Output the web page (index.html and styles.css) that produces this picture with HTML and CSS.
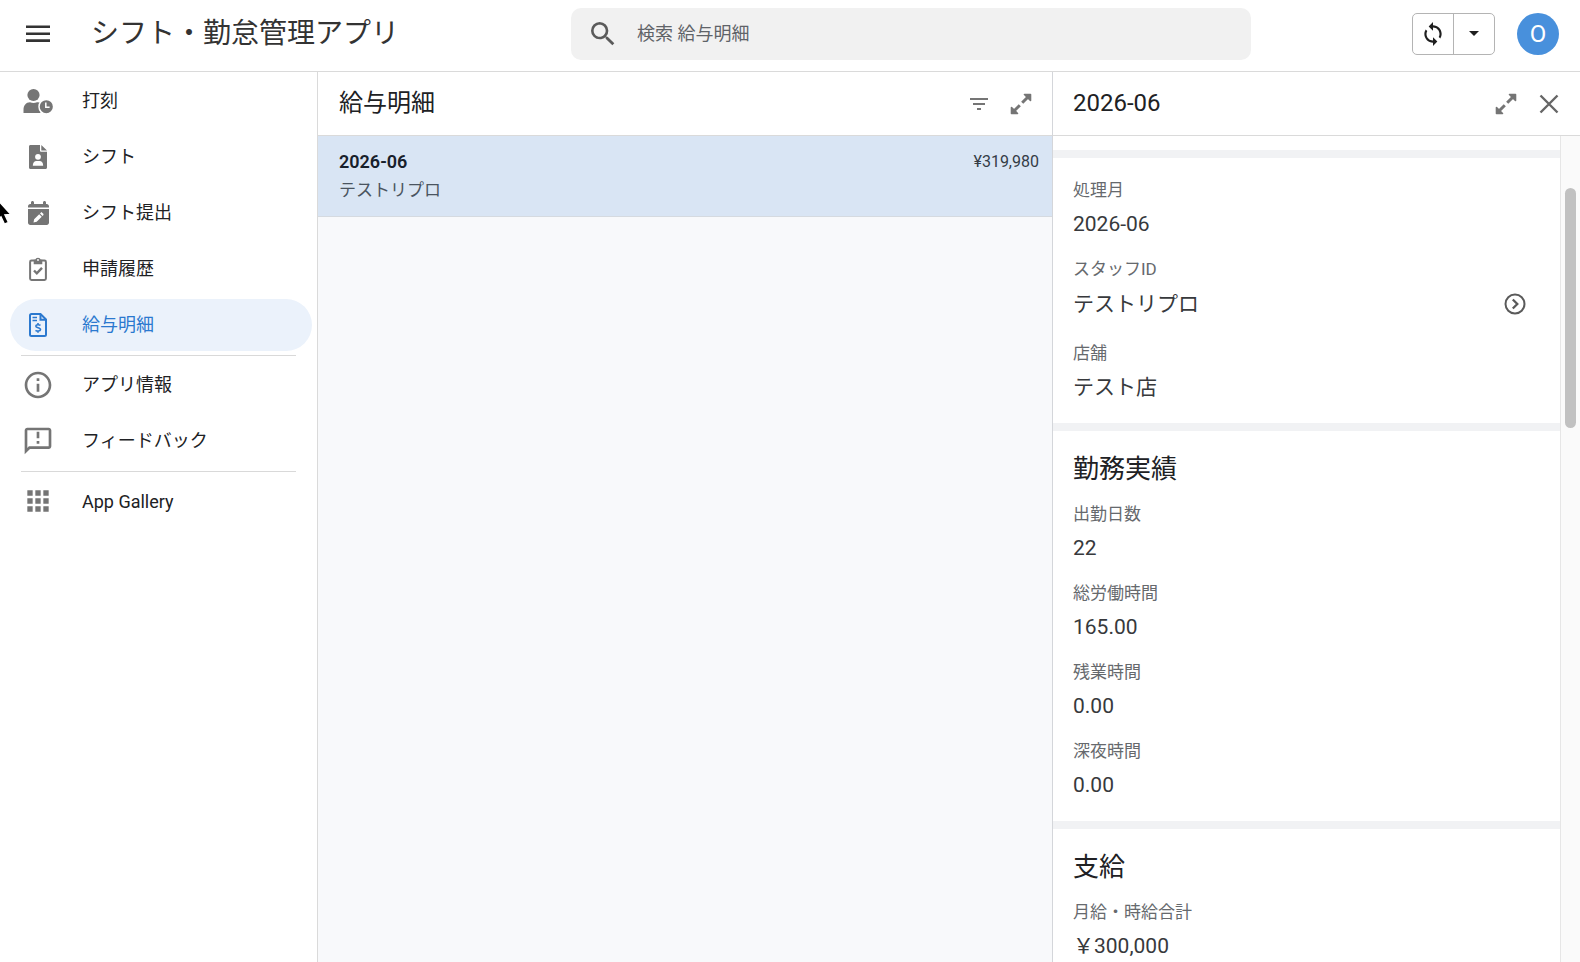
FILE: index.html
```html
<!DOCTYPE html>
<html lang="ja">
<head>
<meta charset="utf-8">
<meta name="viewport" content="width=device-width, initial-scale=1">
<title>シフト・勤怠管理アプリ</title>
<link rel="stylesheet" href="styles.css">
</head>
<body>
<div class="app">
  <header class="topbar">
    <div class="brand">
      <button class="icon-button" type="button" aria-label="メニュー">
        <svg width="24" height="18" viewBox="0 0 24 18" fill="#333"><path d="M0 .5h24v2.600H0zM0 7.400h24V10H0zM0 14.300h24v2.600H0z"/></svg>
      </button>
      <h1 class="app-title">シフト・勤怠管理アプリ</h1>
    </div>
    <label class="search">
      <svg width="32" height="32" viewBox="0 0 24 24" fill="#5a5a5a"><path d="M15.5 14h-.79l-.28-.27A6.471 6.471 0 0 0 16 9.5 6.5 6.5 0 1 0 9.5 16c1.61 0 3.09-.59 4.23-1.57l.27.28v.79l5 4.99L20.49 19l-4.99-5zm-6 0C7.01 14 5 11.99 5 9.5S7.01 5 9.5 5 14 7.01 14 9.5 11.99 14 9.5 14z"/></svg>
      <input class="search-input" type="search" placeholder="検索 給与明細" aria-label="検索 給与明細">
    </label>
    <div class="actions">
      <div class="sync-group">
        <button class="sync-button" type="button" aria-label="同期">
          <svg width="26" height="26" viewBox="0 0 24 24" fill="#1f1f1f"><path d="M12 4V1L8 5l4 4V6c3.31 0 6 2.69 6 6 0 1.01-.25 1.97-.7 2.8l1.46 1.46A7.93 7.93 0 0 0 20 12c0-4.42-3.58-8-8-8zm0 14c-3.31 0-6-2.69-6-6 0-1.01.25-1.97.7-2.8L5.24 7.74A7.93 7.93 0 0 0 4 12c0 4.42 3.58 8 8 8v3l4-4-4-4v3z"/></svg>
        </button>
        <button class="sync-button" type="button" aria-label="同期オプション">
          <svg width="10" height="5" viewBox="0 0 10 5" fill="#1f1f1f"><path d="M0 0h10L5 5z"/></svg>
        </button>
      </div>
      <button class="avatar" type="button">O</button>
    </div>
  </header>

  <div class="workspace">
    <nav class="sidebar">
      <a class="nav-item" href="#"><span class="nav-icon"><svg width="30" height="26" viewBox="0 0 30 26"><g fill="#757575"><circle cx="10.500" cy="7" r="6.100"/><path d="M.5 25v-3.200C.5 17.600 3 14.300 7 14.300c2.300 1 4.700 1 7 0 1.500 0 2.600.4 3.500 1v9.700z"/></g><circle cx="23.300" cy="18.700" r="7.300" fill="#757575" stroke="#fff" stroke-width="1.500"/><path d="M22.800 14.600v4.600h3.800" fill="none" stroke="#fff" stroke-width="1.500"/></svg></span><span class="nav-label">打刻</span></a>
      <a class="nav-item" href="#"><span class="nav-icon"><svg width="18" height="24" viewBox="0 0 18 24"><path fill="#757575" d="M1.500 0H11v5.500c0 .8.500 1.300 1.300 1.300H18v15.700c0 .9-.6 1.500-1.500 1.500h-15C.6 24 0 23.400 0 22.500v-21C0 .6.6 0 1.500 0zM12.300 0 18 5.600h-5.700z"/><circle cx="9" cy="11.800" r="2.900" fill="#fff"/><path fill="#fff" d="M3.800 20.800c0-3 1.600-4.700 3.500-4.700h3.400c1.900 0 3.500 1.700 3.500 4.700z"/></svg></span><span class="nav-label">シフト</span></a>
      <a class="nav-item" href="#"><span class="nav-icon"><svg width="21" height="24" viewBox="0 0 448 512"><path fill="#757575" d="M96 0c18 0 32 14 32 32v32h192V32c0-18 14-32 32-32s32 14 32 32v32h16c26 0 48 22 48 48v28H0v-28c0-26 22-48 48-48h16V32C64 14 78 0 96 0zM0 172h448v292c0 26-22 48-48 48H48c-26 0-48-22-48-48z"/><path fill="#fff" d="m117 456 14-66 108-108 54 54-108 108zM256 265l16-16c9-9 21-9 30 0l24 24c9 9 9 21 0 30l-16 16z"/></svg></span><span class="nav-label">シフト提出</span></a>
      <a class="nav-item" href="#"><span class="nav-icon"><svg width="18" height="24" viewBox="0 0 18 24" fill="none" stroke="#757575" stroke-width="2"><path d="M2.500 3.600h13a1.400 1.400 0 0 1 1.400 1.400v16.500a1.400 1.400 0 0 1-1.400 1.400h-13a1.400 1.400 0 0 1-1.400-1.400V5a1.400 1.400 0 0 1 1.400-1.400z"/><path fill="#757575" stroke="none" d="M4.700 2.800h1.500a2.900 2.900 0 0 1 5.600 0h1.500v4.400H4.700z"/><circle cx="9" cy="3" r=".9" fill="#fff" stroke="none"/><path d="m5 13.500 2.800 2.800 5.200-5.400" stroke-width="2.400"/></svg></span><span class="nav-label">申請履歴</span></a>
      <a class="nav-item nav-item-active" href="#" aria-current="page"><span class="nav-icon"><svg width="18" height="24" viewBox="0 0 18 24" fill="none" stroke="#2b79cf" stroke-width="2"><path d="M2.500 1h9l5.500 5.500v15a1.500 1.500 0 0 1-1.500 1.500h-13A1.500 1.500 0 0 1 1 21.500v-19A1.500 1.500 0 0 1 2.500 1z"/><path d="M11.500 1v5.800H17" /><path d="M3.500 4.400h4.500M3.500 7.400h4.500" stroke-width="1.500"/><path d="M11.500 12.300c-1-.7-4.500-1-4.700.8-.2 2 4.900 1.300 4.700 3.500-.2 2-3.800 1.600-5 .7M9 10v2M9 18v1.800" stroke-width="1.600"/></svg></span><span class="nav-label">給与明細</span></a>
      <hr class="nav-divider">
      <a class="nav-item" href="#"><span class="nav-icon"><svg width="32" height="32" viewBox="0 0 24 24" fill="#757575"><path d="M11 7h2v2h-2zm0 4h2v6h-2zm1-9C6.480 2 2 6.480 2 12s4.480 10 10 10 10-4.480 10-10S17.520 2 12 2zm0 18c-4.410 0-8-3.590-8-8s3.590-8 8-8 8 3.590 8 8-3.590 8-8 8z"/></svg></span><span class="nav-label">アプリ情報</span></a>
      <a class="nav-item" href="#"><span class="nav-icon"><svg width="32" height="32" viewBox="0 0 24 24" fill="#757575"><path d="M20 2H4c-1.100 0-1.990.9-1.990 2L2 22l4-4h14c1.100 0 2-.9 2-2V4c0-1.100-.9-2-2-2zm0 14H5.170L4 17.170V4h16v12zM11 5h2v5h-2zm0 7h2v2h-2z"/></svg></span><span class="nav-label">フィードバック</span></a>
      <hr class="nav-divider">
      <a class="nav-item" href="#"><span class="nav-icon"><svg width="32" height="32" viewBox="0 0 24 24" fill="#757575"><path d="M4 8h4V4H4zm6 12h4v-4h-4zm-6 0h4v-4H4zm0-6h4v-4H4zm6 0h4v-4h-4zm6-10v4h4V4zm-6 4h4V4h-4zm6 6h4v-4h-4zm0 6h4v-4h-4z"/></svg></span><span>App Gallery</span></a>
    </nav>

    <main class="list-pane">
      <div class="pane-header">
        <h2 class="pane-title">給与明細</h2>
        <button class="icon-button" type="button" aria-label="フィルター">
          <svg width="18" height="12" viewBox="0 0 18 12" fill="#757575"><path d="M0 0h18v2H0zM3 5h12v2H3zM7 10h4v2H7z"/></svg>
        </button>
        <button class="icon-button" type="button" aria-label="拡大">
          <svg width="22" height="22" viewBox="0 0 22 22" fill="#757575" stroke="#757575" stroke-linejoin="round"><path d="M14.500 1.500h6v6zM1.500 14.500v6h6z" stroke-width="1.600"/><path d="m18 4-5.800 5.800M9.800 12.200 4 18" stroke-width="3"/></svg>
        </button>
      </div>
      <a class="slip-row" href="#">
        <span class="slip-text">
          <strong class="slip-month">2026-06</strong>
          <span class="slip-name">テストリプロ</span>
        </span>
        <span class="slip-amount">¥319,980</span>
      </a>
    </main>

    <aside class="detail-pane">
      <div class="pane-header">
        <h2 class="pane-title">2026-06</h2>
        <button class="icon-button" type="button" aria-label="拡大">
          <svg width="22" height="22" viewBox="0 0 22 22" fill="#757575" stroke="#757575" stroke-linejoin="round"><path d="M14.500 1.500h6v6zM1.500 14.500v6h6z" stroke-width="1.600"/><path d="m18 4-5.800 5.800M9.800 12.200 4 18" stroke-width="3"/></svg>
        </button>
        <button class="icon-button" type="button" aria-label="閉じる">
          <svg width="20" height="20" viewBox="0 0 20 20" fill="none" stroke="#666" stroke-width="2.400"><path d="m1.500 1.500 17 17M18.500 1.500l-17 17"/></svg>
        </button>
      </div>
      <div class="detail-scroll">
        <div class="detail-body">
          <section class="section">
            <dl class="fields">
              <div class="field"><dt>処理月</dt><dd>2026-06</dd></div>
              <div class="field"><dt>スタッフID</dt><dd class="reference">テストリプロ
                <button class="icon-button" type="button" aria-label="スタッフを表示"><svg width="22" height="22" viewBox="0 0 22 22" fill="none" stroke="#5a5a5a" stroke-width="2"><circle cx="11" cy="11" r="9.500"/><path d="m8.800 6.500 4.500 4.500-4.500 4.500" stroke-width="2.300"/></svg></button></dd></div>
              <div class="field"><dt>店舗</dt><dd>テスト店</dd></div>
            </dl>
          </section>
          <section class="section">
            <h3 class="section-title">勤務実績</h3>
            <dl class="fields">
              <div class="field"><dt>出勤日数</dt><dd>22</dd></div>
              <div class="field"><dt>総労働時間</dt><dd>165.00</dd></div>
              <div class="field"><dt>残業時間</dt><dd>0.00</dd></div>
              <div class="field"><dt>深夜時間</dt><dd>0.00</dd></div>
            </dl>
          </section>
          <section class="section">
            <h3 class="section-title">支給</h3>
            <dl class="fields">
              <div class="field"><dt>月給・時給合計</dt><dd>￥300,000</dd></div>
            </dl>
          </section>
        </div>
        <div class="scroll-track"><div class="scroll-thumb"></div></div>
      </div>
    </aside>
  </div>
  <svg class="cursor" width="14" height="26" viewBox="0 0 14 26"><path d="M-5-6 11 11.500 5 12l3.500 7.500-4 1.800L1 14l-6 5z" fill="#000" stroke="#fff" stroke-width="1.500"/></svg>
</div>
</body>
</html>
```
FILE: styles.css
```css
* {
  box-sizing: border-box;
}

body {
  margin: 0;
  background: #fff;
  color: #202124;
  font-family: Roboto, "Noto Sans CJK JP", sans-serif;
  font-size: 18px;
}

h1, h2, h3, dl, dd {
  margin: 0;
  font-weight: 400;
}

a {
  color: inherit;
  text-decoration: none;
}

svg {
  display: block;
  flex: none;
}

button {
  padding: 0;
  border: 0;
  background: none;
  font: inherit;
}

.app {
  position: relative;
  display: flex;
  flex-direction: column;
  height: 100vh;
  overflow: hidden;
}

.topbar {
  display: grid;
  grid-template-columns: 571px minmax(0, 680px) 1fr;
  flex: none;
  height: 72px;
  padding-bottom: 4px;
  border-bottom: 1px solid #dadada;
}

.brand {
  display: flex;
  align-items: center;
  gap: 41px;
  padding-left: 26px;
}

.app-title {
  color: #333;
  font-size: 28px;
  line-height: 40px;
}

.icon-button {
  display: flex;
  align-items: center;
  justify-content: center;
}

.search {
  display: flex;
  align-items: center;
  gap: 18px;
  align-self: center;
  height: 52px;
  padding: 0 16px;
  border-radius: 10px;
  background: #f1f1f1;
}

.search-input {
  flex: 1;
  min-width: 0;
  padding: 0;
  border: 0;
  outline: 0;
  background: none;
  font: inherit;
}

.search-input::placeholder {
  color: #5f6368;
  opacity: 1;
}

.actions {
  display: flex;
  align-items: center;
  justify-content: flex-end;
  gap: 22px;
  padding-right: 21px;
}

.sync-group {
  display: flex;
  height: 42px;
  border: 1px solid #b4b4b4;
  border-radius: 5px;
}

.sync-button {
  display: flex;
  align-items: center;
  justify-content: center;
  width: 40px;
}

.sync-button + .sync-button {
  width: 41px;
  border-left: 1px solid #b4b4b4;
}

.avatar {
  width: 42px;
  height: 42px;
  border-radius: 50%;
  background: #4890dc;
  color: #fff;
  font-size: 24px;
}

.workspace {
  display: grid;
  grid-template-columns: 318px minmax(0, 734fr) minmax(0, 528fr);
  flex: 1;
  min-height: 0;
}

.sidebar {
  display: flex;
  flex-direction: column;
  gap: 4px;
  padding: 3px 5px 0 10px;
  border-right: 1px solid #dadada;
}

.nav-item {
  display: flex;
  align-items: center;
  gap: 28px;
  height: 52px;
  padding-left: 12px;
  border-radius: 26px;
}

.nav-icon {
  display: flex;
  justify-content: center;
  width: 32px;
}

.nav-label {
  padding-bottom: 4px;
}

.nav-item-active {
  background: #ebf2fb;
  color: #2b79cf;
}

.nav-divider {
  width: 275px;
  height: 1px;
  margin: 0 0 -1px 11px;
  border: 0;
  background: #d9d9d9;
}

.list-pane {
  background: #f8f9fb;
}

.pane-header {
  display: flex;
  align-items: center;
  gap: 22px;
  flex: none;
  height: 64px;
  padding: 0 20px 0 21px;
  border-bottom: 1px solid #dadada;
  background: #fff;
}

.pane-title {
  flex: 1;
  padding-bottom: 2px;
  font-size: 24px;
  line-height: 36px;
}

.slip-row {
  display: flex;
  justify-content: space-between;
  padding: 12px 13px 12px 21px;
  border-bottom: 1px solid #d5dae0;
  background: #d9e5f4;
  line-height: 28px;
}

.slip-text {
  display: flex;
  flex-direction: column;
}

.slip-month {
  color: #17202b;
  font-weight: 600;
}

.slip-name {
  color: #4a5460;
  font-size: 17px;
}

.slip-amount {
  color: #343c46;
  font-size: 16px;
}

.detail-pane {
  display: flex;
  flex-direction: column;
  min-height: 0;
  border-left: 1px solid #d4d6da;
}

.detail-pane .pane-header {
  padding: 0 21px 0 20px;
}

.detail-scroll {
  display: flex;
  flex: 1;
  min-height: 0;
  overflow: hidden;
}

.detail-body {
  flex: 1;
  padding-top: 14px;
}

.section {
  display: flex;
  flex-direction: column;
  gap: 15px;
  padding: 20px;
  border-top: 8px solid #f1f2f4;
}

.section-title {
  font-size: 26px;
  line-height: 36px;
}

.fields {
  display: flex;
  flex-direction: column;
  gap: 17px;
}

.field {
  display: flex;
  flex-direction: column;
  gap: 6px;
}

.field dt {
  color: #66696d;
  font-size: 17px;
  line-height: 24px;
}

.field dd {
  color: #37393c;
  font-size: 21px;
  line-height: 32px;
}

.field .reference {
  display: flex;
  align-items: center;
  justify-content: space-between;
  padding: 1px 14px 4px 0;
}

.scroll-track {
  flex: none;
  width: 20px;
  padding: 52px 4px 0;
  border-left: 1px solid #e6e6e6;
  background: #fafafa;
}

.scroll-thumb {
  height: 240px;
  border-radius: 6px;
  background: #c1c1c1;
}

.cursor {
  position: absolute;
  top: 203px;
  left: 0;
}
```
